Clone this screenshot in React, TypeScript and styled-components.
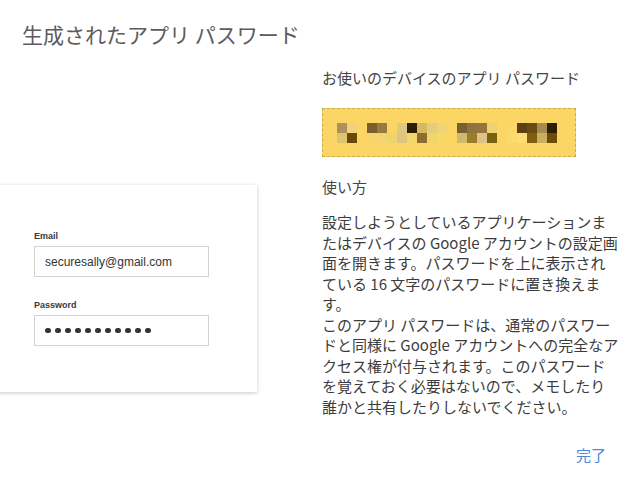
import React from 'react';
import styled, { createGlobalStyle } from 'styled-components';

const GlobalStyle = createGlobalStyle`
  body {
    margin: 0;
    background: #ffffff;
    font-family: 'Noto Sans CJK JP', 'Noto Sans', sans-serif;
  }
`;

const Page = styled.div`
  width: 643px;
  height: 488px;
  overflow: hidden;
  display: flex;
  flex-direction: column;
  background: #ffffff;
`;

const Title = styled.h1`
  margin: 0;
  padding: 22px 0 0 22px;
  font-size: 21px;
  line-height: 24px;
  font-weight: 400;
  color: #5c5c5c;
`;

const Columns = styled.div`
  display: grid;
  grid-template-columns: 322px minmax(0, 1fr);
  flex: 1;
`;

const Illustration = styled.div`
  padding-top: 139px;
`;

const LoginCard = styled.div`
  margin-left: -30px;
  width: 287px;
  height: 207px;
  box-sizing: border-box;
  padding: 45px 0 0 64px;
  background: #ffffff;
  box-shadow: 0 1px 4px rgba(0, 0, 0, 0.22);
  font-family: 'Liberation Sans', Arial, sans-serif;
`;

const FieldLabel = styled.div`
  font-size: 9px;
  line-height: 12px;
  font-weight: 700;
  color: #3a3a3a;
  margin-bottom: 4px;
`;

const FieldBox = styled.div`
  width: 175px;
  height: 31px;
  box-sizing: border-box;
  border: 1px solid #d2d2d2;
  display: flex;
  align-items: center;
  padding-left: 10px;
  gap: 4.3px;
  font-size: 12px;
  color: #333333;
  margin-bottom: ${(p: { $last?: boolean }) => (p.$last ? '0' : '22px')};
`;

const Dot = styled.span`
  width: 5.7px;
  height: 5.7px;
  border-radius: 50%;
  background: #333333;
`;

const Details = styled.div`
  padding: 22px 37px 0 0;
  display: flex;
  flex-direction: column;
`;

const Heading = styled.div`
  font-size: 15px;
  line-height: 20.5px;
  color: #454545;
`;

const Masked = styled.div`
  margin: 19.5px 0 20px;
  width: 254px;
  height: 49px;
  box-sizing: border-box;
  background: #fcd664;
  border: 1px dashed #c9aa4c;
  display: flex;
  align-items: center;
  padding-left: 14px;
`;

const Instructions = styled.div`
  margin-top: 14.5px;
  font-size: 15px;
  line-height: 20.5px;
  color: #3c3c3c;
  white-space: nowrap;
`;

const Line = styled.span`
  display: block;
`;

const Actions = styled.div`
  margin-top: 28px;
  display: flex;
  justify-content: flex-end;
`;

const DoneButton = styled.button`
  border: none;
  background: none;
  padding: 0;
  font-family: inherit;
  font-size: 15px;
  line-height: 20.5px;
  color: #4d86de;
  cursor: pointer;
`;

const cells: [number, number, string][] = [
  [0, 0, '#b08f5f'], [1, 0, '#f0d27a'], [3, 0, '#7a5e30'], [4, 0, '#977a3f'],
  [6, 0, '#e0c882'], [7, 0, '#2b1e08'], [8, 0, '#d6b860'], [9, 0, '#e3cc7c'],
  [10, 0, '#f0d375'], [12, 0, '#786035'], [13, 0, '#8e733e'], [14, 0, '#947540'],
  [15, 0, '#efd173'], [17, 0, '#fbd768'], [18, 0, '#5c3f12'], [19, 0, '#6a4c10'],
  [20, 0, '#a78a4e'], [21, 0, '#2c1f06'],
  [0, 1, '#dcc470'], [1, 1, '#6a4908'], [3, 1, '#f6d669'], [4, 1, '#f2d470'],
  [5, 1, '#f1d36c'], [6, 1, '#e0c57e'], [7, 1, '#f3d56a'], [8, 1, '#8c6d2e'],
  [9, 1, '#f2d46a'], [10, 1, '#fad868'], [12, 1, '#d2b86a'], [13, 1, '#9c7c27'],
  [14, 1, '#dec288'], [15, 1, '#7c6011'], [17, 1, '#fbd96b'], [18, 1, '#ffdc78'],
  [19, 1, '#7f5f0d'], [20, 1, '#c9ad61'], [21, 1, '#6b4d06'],
];

const lines = [
  '設定しようとしているアプリケーションま',
  'たはデバイスの Google アカウントの設定画',
  '面を開きます。パスワードを上に表示され',
  'ている 16 文字のパスワードに置き換えま',
  'す。',
  'このアプリ パスワードは、通常のパスワー',
  'ドと同様に Google アカウントへの完全なア',
  'クセス権が付与されます。このパスワード',
  'を覚えておく必要はないので、メモしたり',
  '誰かと共有したりしないでください。',
];

const App: React.FC = () => (
  <Page>
    <GlobalStyle />
    <Title>生成されたアプリ パスワード</Title>
    <Columns>
      <Illustration>
        <LoginCard>
          <FieldLabel>Email</FieldLabel>
          <FieldBox>securesally@gmail.com</FieldBox>
          <FieldLabel>Password</FieldLabel>
          <FieldBox $last>
            {Array.from({ length: 11 }).map((_, i) => (
              <Dot key={i} />
            ))}
          </FieldBox>
        </LoginCard>
      </Illustration>
      <Details>
        <Heading>お使いのデバイスのアプリ パスワード</Heading>
        <Masked>
          <svg width="220" height="20" viewBox="0 0 220 20">
            {cells.map(([x, y, c]) => (
              <rect key={`${x}-${y}`} x={x * 10} y={y * 10} width="10" height="10" fill={c} />
            ))}
          </svg>
        </Masked>
        <Heading>使い方</Heading>
        <Instructions>
          {lines.map((l) => (
            <Line key={l}>{l}</Line>
          ))}
        </Instructions>
        <Actions>
          <DoneButton>完了</DoneButton>
        </Actions>
      </Details>
    </Columns>
  </Page>
);

export default App;
